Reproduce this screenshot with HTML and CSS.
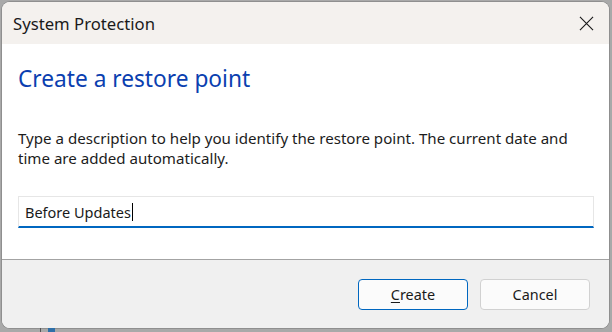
FILE: index.html
```html
<!DOCTYPE html>
<html>
<head>
<meta charset="utf-8">
<link rel="stylesheet" href="styles.css">
</head>
<body>
<div class="desk">
  <div class="window">
    <div class="titlebar">
      <span class="title">System Protection</span>
      <svg class="close" width="16" height="16" viewBox="0 0 16 16"><path d="M1 1L15 15M15 1L1 15" stroke="#1a1a1a" stroke-width="1.2" fill="none"/></svg>
    </div>
    <div class="content">
      <h1 class="heading">Create a restore point</h1>
      <p class="desc">Type a description to help you identify the restore point. The current date and time are added automatically.</p>
      <div class="field"><span class="value">Before Updates</span><span class="caret"></span></div>
    </div>
    <div class="footer">
      <button class="btn btn-default"><u>C</u>reate</button>
      <button class="btn">Cancel</button>
    </div>
  </div>
  <div class="below">
    <span class="tick"></span><span class="blue"></span>
  </div>
</div>
</body>
</html>
```
FILE: styles.css
```css
html, body {
  margin: 0;
  padding: 0;
  width: 612px;
  height: 332px;
  overflow: hidden;
  background: #a9a9a9;
  font-family: "Noto Sans", "Open Sans", sans-serif;
}
.desk {
  display: flex;
  flex-direction: column;
  height: 332px;
  padding: 2px 3px 0 2px;
  box-sizing: border-box;
}
.window {
  height: 326px;
  border-radius: 8px;
  overflow: hidden;
  display: flex;
  flex-direction: column;
  background: #ffffff;
  box-shadow: 0 0 0 1px #8f8f8f;
}
.titlebar {
  height: 42px;
  flex: none;
  background: #f4f1ee;
  display: flex;
  align-items: center;
  justify-content: space-between;
  padding: 0 15px 0 11px;
}
.title {
  font-size: 16.7px;
  color: #1a1a1a;
}
.close {
  width: 15px;
  height: 15px;
}
.content {
  flex: 1;
  padding: 20px 15px 0 16px;
  background: #fff;
}
.heading {
  margin: 0;
  font-weight: normal;
  font-size: 22.7px;
  line-height: 30px;
  color: #0b3fb0;
}
.desc {
  margin: 34px 0 0 0;
  font-size: 15.1px;
  line-height: 20px;
  color: #1c1c1c;
}
.field {
  margin-top: 28px;
  height: 29px;
  border: 1px solid #e6e6e6;
  border-bottom: 2px solid #0067c0;
  display: flex;
  align-items: center;
  padding-left: 6px;
  font-size: 14.5px;
  color: #1a1a1a;
}
.caret {
  width: 1px;
  height: 18px;
  background: #000;
  margin-left: 1px;
}
.footer {
  height: 68px;
  flex: none;
  border-top: 1px solid #a3a3a3;
  background: #f0f0f0;
  display: flex;
  justify-content: flex-end;
  align-items: center;
  gap: 12px;
  padding: 0 19px 0 0;
}
.btn {
  width: 110px;
  height: 31px;
  border: 1px solid #d1d1d1;
  border-radius: 4px;
  background: #fbfbfb;
  font-family: "Noto Sans", "Open Sans", sans-serif;
  font-size: 14.4px;
  color: #1a1a1a;
  padding: 0;
}
.btn-default {
  border-color: #0067c0;
}
.btn u {
  text-underline-offset: 2px;
}
.below {
  flex: 1;
  position: relative;
}
.tick {
  position: absolute;
  left: 38px;
  top: 0;
  width: 1px;
  height: 4px;
  background: #555;
}
.blue {
  position: absolute;
  left: 46px;
  top: 0;
  width: 7px;
  height: 4px;
  background: #2f6fa8;
}
```
